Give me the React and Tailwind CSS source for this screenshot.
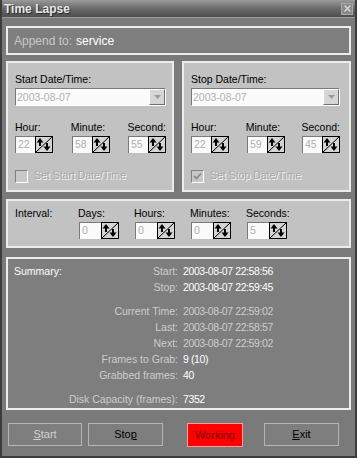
import React from 'react';

const SpinButton = () => (
  <svg width="18" height="17" viewBox="0 0 18 17" className="block shrink-0">
    <rect x="0.5" y="0.5" width="17" height="16" fill="#d4d4d4" stroke="#000" />
    <line x1="1" y1="16" x2="17" y2="1" stroke="#000" />
    <path d="M1.5 6.5 L5 2 L8.5 6.5 Z" fill="#000" />
    <rect x="4" y="6" width="2" height="4" fill="#000" />
    <rect x="11" y="7" width="2" height="4" fill="#000" />
    <path d="M8.5 10.5 L12 15 L15.5 10.5 Z" fill="#000" />
  </svg>
);

function Spin({ value, wide }) {
  return (
    <div className="flex h-[17px]">
      <div
        className={`${wide ? 'w-[22px]' : 'w-[20px]'} h-[17px] bg-[#fbfbfb] border-t border-l border-[#7a7a7a] pl-[2px] text-[#b0b0b0] leading-[15px]`}
      >
        {value}
      </div>
      <SpinButton />
    </div>
  );
}

function Combo({ value }) {
  return (
    <div className="flex h-[18px] bg-[#fbfbfb] border-t border-l border-[#7a7a7a] border-b border-r border-b-[#ffffff] border-r-[#ffffff]">
      <div className="flex-1 pl-[1px] text-[#b0b0b0] leading-[16px]">{value}</div>
      <div className="w-[16px] h-[16px] bg-[#d6d6d6] border-t border-l border-white border-b border-r border-b-[#707070] border-r-[#707070] flex items-center justify-center">
        <svg width="7" height="4" viewBox="0 0 7 4">
          <path d="M0 0 L7 0 L3.5 4 Z" fill="#9a9a9a" />
        </svg>
      </div>
    </div>
  );
}

function CheckBox({ checked }) {
  return (
    <div className="w-[13px] h-[13px] bg-[#c8c8c8] border-t border-l border-[#808080] border-b border-r border-b-white border-r-white flex items-center justify-center">
      {checked && (
        <svg width="9" height="9" viewBox="0 0 9 9">
          <path d="M1 4 L3.5 6.5 L8 1.5" stroke="#8a8a8a" strokeWidth="1.8" fill="none" />
        </svg>
      )}
    </div>
  );
}

function DatePanel({ title, date, h, m, s, checkLabel, checked, className }) {
  return (
    <div className={`h-[131px] bg-[#c2c2c2] border-2 border-[#ececec] text-black ${className}`}>
      <div className="mt-[9px] leading-[14px]">{title}</div>
      <div className="mt-[2px]">
        <Combo value={date} />
      </div>
      <div className="mt-[14px] flex leading-[14px]">
        <div className="w-[56px]">Hour:</div>
        <div className="w-[57px]">Minute:</div>
        <div>Second:</div>
      </div>
      <div className="mt-[2px] flex">
        <div className="w-[57px]">
          <Spin value={h} />
        </div>
        <div className="w-[56px]">
          <Spin value={m} />
        </div>
        <div>
          <Spin value={s} />
        </div>
      </div>
      <div className="mt-[16px] flex items-center gap-[6px] h-[14px]">
        <CheckBox checked={checked} />
        <span className="text-[#a8a8a8] [text-shadow:1px_1px_0_#f4f4f4]">{checkLabel}</span>
      </div>
    </div>
  );
}

function Row({ label, value, bright, first }) {
  return (
    <div className="flex h-[16px] leading-[16px]">
      <div className="w-[170px] flex justify-between pl-[6px] text-[#cdcdcd]">
        <span className="text-white">{first ? 'Summary:' : ''}</span>
        <span>{label}</span>
      </div>
      <div className={`ml-[5px] tracking-[-0.4px] ${bright ? 'text-white' : 'text-[#cdcdcd]'}`}>{value}</div>
    </div>
  );
}

function Btn({ children, className }) {
  return (
    <div className={`h-[23px] border border-[#b4b4b4] bg-[#7e7e7e] flex items-center justify-center ${className}`}>
      {children}
    </div>
  );
}

export default function App() {
  return (
    <div className="w-[357px] h-[458px] overflow-hidden bg-[#7a7a7a] border-l-2 border-r-2 border-b-2 border-[#3c3c3c] font-['Liberation_Sans',Arial,sans-serif] text-[10.5px] select-none">
      {/* Title bar */}
      <div className="h-[18px] border-b border-[#9c9c9c] bg-gradient-to-b from-[#9a9a9a] via-[#6a6a6a] to-[#4e4e4e] flex items-center justify-between pl-[2px] pr-[2px]">
        <span className="text-[12px] font-bold text-[#e8e8e8] [text-shadow:1px_1px_0_#2a2a2a]">Time Lapse</span>
        <div className="w-[12px] h-[12px] bg-[#8a8a8a] border border-[#a8a8a8] flex items-center justify-center">
          <svg width="7" height="7" viewBox="0 0 7 7">
            <path d="M0.5 0.5 L6.5 6.5 M6.5 0.5 L0.5 6.5" stroke="#d8d8d8" strokeWidth="1.4" />
          </svg>
        </div>
      </div>

      <div className="px-[4px]">
        {/* Append to */}
        <div className="mt-[8px] h-[29px] border-2 border-[#ececec] bg-[#7e7e7e] flex items-center pl-[6px] text-[12px]">
          <span className="text-[#c8c8c8]">Append to:</span>
          <span className="ml-[4px] text-white">service</span>
        </div>

        {/* Start / Stop */}
        <div className="mt-[6px] flex gap-[8px]">
          <DatePanel
            className="w-[168px] pl-[7px] pr-[6px]"
            title="Start Date/Time:"
            date="2003-08-07"
            h="22"
            m="58"
            s="55"
            checkLabel="Set Start Date/Time"
          />
          <DatePanel
            className="w-[169px] pl-[7px] pr-[9px]"
            title="Stop Date/Time:"
            date="2003-08-07"
            h="22"
            m="59"
            s="45"
            checkLabel="Set Stop Date/Time"
            checked
          />
        </div>

        {/* Interval */}
        <div className="mt-[7px] h-[49px] bg-[#c2c2c2] border-2 border-[#ececec] text-black flex pl-[7px]">
          <div className="w-[64px] mt-[5px] leading-[14px]">Interval:</div>
          {[
            ['Days:', '0'],
            ['Hours:', '0'],
            ['Minutes:', '0'],
            ['Seconds:', '5'],
          ].map(([l, v]) => (
            <div key={l} className="w-[56px] mt-[5px]">
              <div className="leading-[14px] -ml-[1px]">{l}</div>
              <div className="mt-[2px]">
                <Spin value={v} wide />
              </div>
            </div>
          ))}
        </div>

        {/* Summary */}
        <div className="mt-[9px] h-[153px] bg-[#7e7e7e] border-2 border-[#ececec] pt-[4px]">
          <Row first label="Start:" value="2003-08-07 22:58:56" bright />
          <Row label="Stop:" value="2003-08-07 22:59:45" bright />
          <div className="h-[8px]" />
          <Row label="Current Time:" value="2003-08-07 22:59:02" />
          <Row label="Last:" value="2003-08-07 22:58:57" />
          <Row label="Next:" value="2003-08-07 22:59:02" />
          <Row label="Frames to Grab:" value="9 (10)" bright />
          <Row label="Grabbed frames:" value="40" bright />
          <div className="h-[8px]" />
          <Row label="Disk Capacity (frames):" value="7352" bright />
        </div>

        {/* Buttons */}
        <div className="mt-[13px] flex items-start pl-[2px] text-[11px]">
          <Btn className="w-[74px]">
            <span className="text-[#d0d0d0]">
              <span className="underline">S</span>tart
            </span>
          </Btn>
          <Btn className="w-[75px] ml-[6px]">
            <span className="text-black">
              Sto<span className="underline">p</span>
            </span>
          </Btn>
          <div className="w-[56px] h-[24px] ml-[24px] bg-[#ff0000] border border-[#ff9a9a] flex items-center justify-center text-[#7a0000]">
            Working
          </div>
          <Btn className="w-[75px] ml-[21px]">
            <span className="text-black">
              <span className="underline">E</span>xit
            </span>
          </Btn>
        </div>
      </div>
    </div>
  );
}
